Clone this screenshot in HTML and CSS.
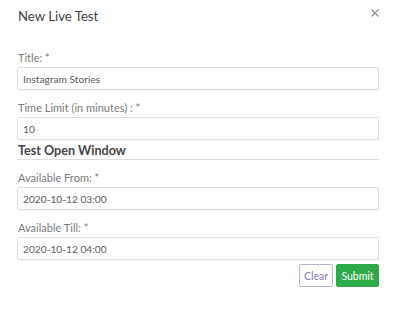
FILE: index.html
```html
<!DOCTYPE html>
<html lang="en">
<head>
  <meta charset="UTF-8" />
  <meta name="viewport" content="width=device-width, initial-scale=1.0"/>
  <title>New Live Test</title>
  <link rel="stylesheet" href="styles.css">
</head>
<body>
  <div class="modal">
    <div class="modal-header">
      <h1 class="modal-title">New Live Test</h1>
      <button class="close" aria-label="Close">
        <svg width="8" height="8" viewBox="0 0 8 8"><path d="M0.5 0.5 L7.5 7.5 M7.5 0.5 L0.5 7.5" stroke="#8a8a8a" stroke-width="1.1" fill="none"/></svg>
      </button>
    </div>

    <form class="modal-body">
      <div class="field">
        <label>Title: *</label>
        <input type="text" value="Instagram Stories">
      </div>
      <div class="field">
        <label>Time Limit (in minutes) : *</label>
        <input type="text" value="10">
      </div>

      <h2 class="section-title">Test Open Window</h2>

      <div class="field">
        <label>Available From: *</label>
        <input type="text" value="2020-10-12 03:00">
      </div>
      <div class="field">
        <label>Available Till: *</label>
        <input type="text" value="2020-10-12 04:00">
      </div>

      <div class="actions">
        <button type="button" class="btn btn-clear">Clear</button>
        <button type="button" class="btn btn-submit">Submit</button>
      </div>
    </form>
  </div>
</body>
</html>
```

FILE: styles.css
```css
body {
  margin: 0;
  background-color: #fff;
  font-family: Lato, "Open Sans", sans-serif;
}
.modal {
  width: 362px;
  padding: 6px 18px 0 17px;
}
.modal-header {
  display: flex;
  justify-content: space-between;
  align-items: flex-start;
}
.modal-title {
  margin: 0;
  font-size: 13.2px;
  line-height: 20px;
  font-weight: 400;
  color: #404040;
  padding-left: 1px;
}
.close {
  border: 0;
  background: none;
  padding: 0;
  margin: 3px 0 0 0;
  width: 8px;
  height: 8px;
  display: flex;
}
.modal-body {
  margin-top: 25px;
}
.field {
  margin-bottom: 11px;
}
.field label {
  display: block;
  font-size: 11px;
  line-height: 14px;
  color: #7a7a7a;
  padding-left: 1px;
  margin-bottom: 2px;
}
.field input {
  display: block;
  box-sizing: border-box;
  width: 100%;
  height: 23px;
  margin: 0;
  padding: 0 5px;
  border: 1px solid #dedede;
  border-radius: 2px;
  box-shadow: 0 1px 1px rgba(0, 0, 0, 0.04);
  font-family: inherit;
  font-size: 10.2px;
  color: #5a5a5a;
}
.section-title {
  margin: -8px 0 11px 0;
  font-size: 12.6px;
  line-height: 16px;
  font-weight: 700;
  color: #444;
  padding-left: 1px;
  border-bottom: 1px solid #ddd;
}
.actions {
  display: flex;
  justify-content: flex-end;
  gap: 3px;
  margin-top: -7px;
}
.btn {
  height: 23px;
  border-radius: 2px;
  font-family: inherit;
  font-size: 10.5px;
  padding: 0;
  text-align: center;
}
.btn-clear {
  width: 34px;
  background: #fff;
  border: 1px solid #b7b1df;
  color: #7f77bd;
}
.btn-submit {
  width: 43px;
  background: #2eaa48;
  border: 1px solid #2eaa48;
  color: #fff;
}
```
